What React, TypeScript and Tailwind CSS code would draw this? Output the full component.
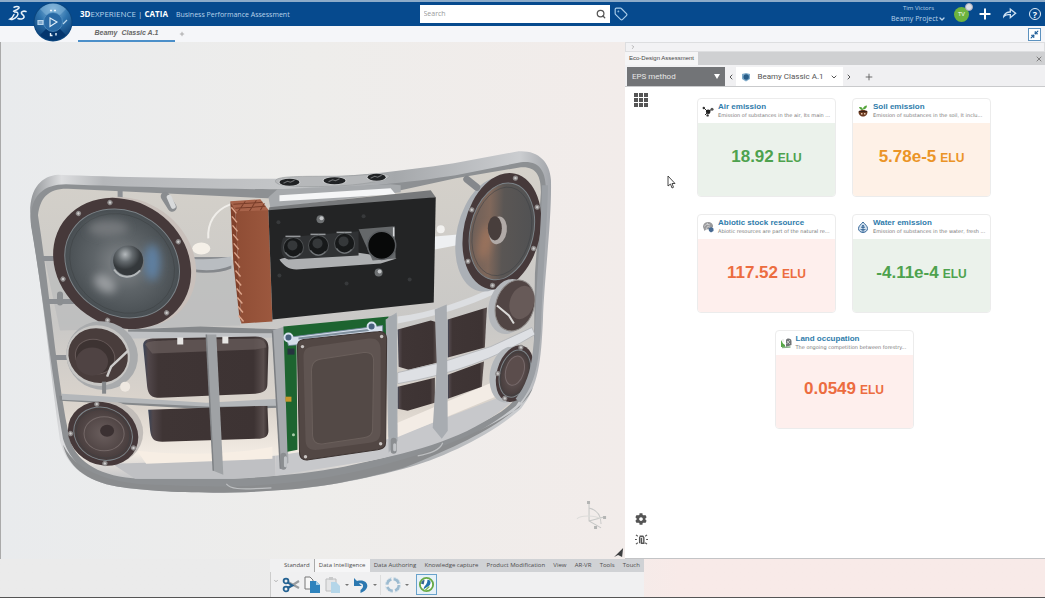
import type { ReactNode } from "react";
import {
  ChevronDown,
  ChevronLeft,
  ChevronRight,
  Minimize2,
  Plus,
  Search,
  Tag,
  X,
} from "lucide-react";
import { FaCog } from "react-icons/fa";
import { RiShareForwardLine } from "react-icons/ri";

type Tone = "green" | "orange" | "red";

interface Impact {
  title: string;
  description: string;
  value: string;
  tone: Tone;
  icon: ReactNode;
}

const toneStyles: Record<Tone, string> = {
  green: "bg-[#ebf2eb] text-[#4ea24e]",
  orange: "bg-[#fef1e7] text-[#eb9426]",
  red: "bg-[#feefed] text-[#ec6c40]",
};

const impacts: Impact[] = [
  {
    title: "Air emission",
    description: "Emission of substances in the air, Its main ...",
    value: "18.92",
    tone: "green",
    icon: <AirIcon />,
  },
  {
    title: "Soil emission",
    description: "Emission of substances in the soil, It inclu...",
    value: "5.78e-5",
    tone: "orange",
    icon: <SoilIcon />,
  },
  {
    title: "Abiotic stock resource",
    description: "Abiotic resources are part of the natural re...",
    value: "117.52",
    tone: "red",
    icon: <StockIcon />,
  },
  {
    title: "Water emission",
    description: "Emission of substances in the water, fresh ...",
    value: "-4.11e-4",
    tone: "green",
    icon: <WaterIcon />,
  },
  {
    title: "Land occupation",
    description: "The ongoing competition between forestry...",
    value: "0.0549",
    tone: "red",
    icon: <LandIcon />,
  },
];

const sections = [
  "Data Authoring",
  "Knowledge capture",
  "Product Modification",
  "View",
  "AR-VR",
  "Tools",
  "Touch",
];

function AirIcon() {
  return (
    <svg viewBox="0 0 12 12" className="size-3">
      <path d="M6 7 2 3M6 7l4-3M6 7 3 10" stroke="#333" strokeWidth="1" />
      <circle cx="6.2" cy="6.8" r="2.3" fill="#222" />
      <circle cx="1.8" cy="3" r="1.2" fill="#333" />
      <circle cx="10" cy="4.2" r="1.5" fill="#555" />
      <circle cx="5.6" cy="10.4" r="1.2" fill="#333" />
    </svg>
  );
}

function SoilIcon() {
  return (
    <svg viewBox="0 0 12 12" className="size-3">
      <path d="M6 5C3 5 2.500 3 2 2c3-.5 4 1 4 3ZM6 4c0-2 2-3.500 4-3.500C10 3 8 4.500 6 4.500Z" fill="#55a53c" />
      <path d="M1.500 6.500C3 4.500 9 4.500 10.500 6.500 10.500 10 8.500 11.500 6 11.500S1.500 10 1.500 6.500Z" fill="#6b3a20" />
      <path d="M4 8h1.500v1.500H4zM7 8h1.500v1.500H7z" fill="#e8c9ae" />
      <path d="M2 6.500h8" stroke="#3a2015" strokeWidth="1" />
    </svg>
  );
}

function StockIcon() {
  return (
    <svg viewBox="0 0 12 12" className="size-3">
      <path d="M1 6C1 2.500 4 .500 7 1c3 .5 4.500 3 4 5l-2 2-5 .500L2.500 10Z" fill="#9a9a9c" />
      <path d="M2 5.500 5 3l3 1M4 8l2-3 3 2M5 1.500 6 4" stroke="#dcdcde" strokeWidth=".7" fill="none" />
      <path d="M6.500 7.500 9 6l2.500 1.500v2.500L9 11.500l-2-1.500Z" fill="#496b93" />
    </svg>
  );
}

function WaterIcon() {
  return (
    <svg viewBox="0 0 12 12" className="size-3">
      <path d="M6 1c2 2.500 4.500 4 4.500 6.500a4.500 4 0 0 1-9 0C1.500 5 4 3.500 6 1Z" fill="#d3e2f0" stroke="#39699a" strokeWidth="1" />
      <path d="M6 4 4.500 6.500h3ZM3.500 8.500h5M4.500 10h3M6 4v6" stroke="#2e5f92" strokeWidth=".8" fill="none" />
    </svg>
  );
}

function LandIcon() {
  return (
    <svg viewBox="0 0 12 12" className="size-3">
      <path d="M1 3v7h4V8L3 6.500Z" fill="#57a747" />
      <path d="M6 3c1-2 5-2 5.500 1v4L6 10Z" fill="#707477" />
      <path d="M2 10.500 10.500 10" stroke="#8ab58a" strokeWidth="1.400" />
      <path d="m7 4 3 3M10 3 6.500 7M3 2v3" stroke="#d6dad6" strokeWidth=".8" />
    </svg>
  );
}

function DassaultLogo() {
  return (
    <svg viewBox="0 0 20 18" className="h-[18px] w-5" fill="none" stroke="#eaf3fa" strokeLinecap="round">
      <path d="M6 2.200c3-1.200 6-.6 4.800 1C9.500 4.800 7 5.600 5.500 6.200" strokeWidth="1.500" />
      <path d="M6.500 7c3.500-.4 4.500 1.600 2.500 4.200C7 13.800 3.500 15 1.800 14.200 3.500 13.500 5.200 11.500 6 9.500" strokeWidth="1.400" />
      <path d="M18 6.500c-2.500-.8-5 0-4.600 1.600.4 1.400 3 2.200 2.700 4-.4 2-3.800 2.400-6.100 1.400" strokeWidth="1.600" />
    </svg>
  );
}

function Compass() {
  return (
    <svg viewBox="0 0 40 40" className="size-10">
      <defs>
        <radialGradient id="compass" cx=".5" cy=".15" r=".9">
          <stop offset="0" stopColor="#8dbbdd" />
          <stop offset=".45" stopColor="#2f74ae" />
          <stop offset="1" stopColor="#06386f" />
        </radialGradient>
      </defs>
      <circle cx="20" cy="20" r="19.500" fill="#0b467f" />
      <circle cx="20" cy="20" r="18.500" fill="url(#compass)" />
      <path d="M7 7a19 19 0 0 1 26 0l-7 7a9 9 0 0 0-12 0Z" fill="#7fb4da" opacity=".5" />
      <path d="M7 33a19 19 0 0 0 26 0l-7-7a9 9 0 0 1-12 0Z" fill="#04366e" />
      <circle cx="20" cy="20" r="9.500" fill="#2a6aa5" stroke="#5d9bc9" strokeWidth=".6" />
      <path d="m17 16 7 4-7 4.500Z" fill="none" stroke="#e3f0fa" strokeWidth="1.100" />
      <path d="M5 18.500h5v4H5zM30 22l4-4" stroke="#b9d5eb" strokeWidth="1.200" fill="#7fa9cd" />
      <path d="M17 8.500h2m2 0h2M17.500 31v2.500h2M23 31v2.500" stroke="#eaf4fc" strokeWidth="1.400" fill="none" />
    </svg>
  );
}

interface DriverProps {
  cx: number;
  cy: number;
  rx: number;
  ry: number;
  tilt: number;
  fill: string;
  screws: number[];
}

function Driver({ cx, cy, rx, ry, tilt, fill, screws }: DriverProps) {
  return (
    <g transform={`translate(${cx} ${cy}) rotate(${tilt})`}>
      <ellipse rx={rx} ry={ry} fill="#46393a" />
      <ellipse rx={rx * 0.83} ry={ry * 0.83} fill={fill} stroke="#7c8489" strokeWidth="1" />
      <ellipse rx={rx * 0.76} ry={ry * 0.76} fill="none" stroke="#3c4043" strokeWidth=".8" opacity=".6" />
      {screws.map((angle) => {
        const a = (angle * Math.PI) / 180;
        return (
          <g key={angle} transform={`translate(${Math.cos(a) * rx * 0.93} ${Math.sin(a) * ry * 0.93})`}>
            <circle r="2.600" fill="#8d8a8a" />
            <circle r="1.200" fill="#cfcdcd" />
          </g>
        );
      })}
    </g>
  );
}

function SpeakerModel() {
  return (
    <svg
      viewBox="0 42 625 516"
      preserveAspectRatio="xMidYMid slice"
      className="h-full w-full"
      role="img"
      aria-label="Beamy Classic speaker model"
    >
      <defs>
        <linearGradient id="rim" x1="0" x2="1" y1="0" y2="0">
          <stop offset="0" stopColor="#929598" />
          <stop offset=".06" stopColor="#dcdddf" />
          <stop offset=".14" stopColor="#b5b7ba" />
          <stop offset=".5" stopColor="#c4c6c8" />
          <stop offset=".7" stopColor="#a5a8ab" />
          <stop offset=".94" stopColor="#cbcdd0" />
          <stop offset="1" stopColor="#a2a5aa" />
        </linearGradient>
        <linearGradient id="inside" x1="0" x2="0" y1="0" y2="1">
          <stop offset="0" stopColor="#d5d1ca" />
          <stop offset=".5" stopColor="#c9c8c6" />
          <stop offset=".78" stopColor="#dcd5cd" />
          <stop offset=".92" stopColor="#f2ebe3" />
          <stop offset="1" stopColor="#c4c5c7" />
        </linearGradient>
        <radialGradient id="woofer">
          <stop offset="0" stopColor="#85898c" />
          <stop offset=".5" stopColor="#5e6468" />
          <stop offset="1" stopColor="#484e52" />
        </radialGradient>
        <linearGradient id="wooferRight" x1="0" x2="1" y1=".6" y2=".3">
          <stop offset="0" stopColor="#6b5e58" />
          <stop offset=".3" stopColor="#80685b" />
          <stop offset=".5" stopColor="#5a5654" />
          <stop offset="1" stopColor="#505153" />
        </linearGradient>
        <radialGradient id="small">
          <stop offset="0" stopColor="#6a5e5d" />
          <stop offset="1" stopColor="#463b3b" />
        </radialGradient>
        <radialGradient id="dome" cx=".4" cy=".3">
          <stop offset="0" stopColor="#b4b9bc" />
          <stop offset=".5" stopColor="#646a6e" />
          <stop offset="1" stopColor="#34383b" />
        </radialGradient>
        <linearGradient id="battery" x1="0" x2="1" y1="0" y2="0">
          <stop offset="0" stopColor="#3a4458" />
          <stop offset=".04" stopColor="#51474a" />
          <stop offset=".12" stopColor="#3f3535" />
          <stop offset=".88" stopColor="#3d3333" />
          <stop offset=".96" stopColor="#594e4d" />
          <stop offset="1" stopColor="#352c2c" />
        </linearGradient>
        <linearGradient id="copper" x1="0" x2="1" y1="0" y2="0">
          <stop offset="0" stopColor="#8f4d35" />
          <stop offset="1" stopColor="#9c583e" />
        </linearGradient>
        <filter id="glow" x="-50%" y="-50%" width="200%" height="200%">
          <feGaussianBlur stdDeviation="4" />
        </filter>
      </defs>

      {/* enclosure */}
      <path
        d="M31 223C27 190 40 176 58 174.500 120 177 220 179 277 178.500 350 177 400 171 453 163L515 151.500C535 149 549 160 550 180 551 220 543 280 542 320 540 360 538 385 520 408 490 435 440 458 403 468 350 482 310 488 270 490 210 494 150 491 118 486 85 480 66 465 60 440 50 370 44 300 31 223Z"
        fill="url(#rim)"
      />
      <path
        d="M31 225C29 197 42 184 66 184 140 187 230 189 285 189 350 189 410 182 455 175L520 162C538 160 545 170 545 190 544 240 538 290 538 330 537 360 530 385 515 405 480 434 440 450 403 460 350 476 310 482 270 485 200 489 150 487 115 481 85 475 70 460 63 438 51 370 44 300 31 225Z"
        fill="#8d9093"
      />
      <path d="M63 444C80 479 130 484 160 484 240 488 290 484 340 474 420 458 480 433 518 407L532 387C523 410 480 437 403 467 350 482 310 488 270 490 210 494 150 491 118 486 85 480 68 465 63 444Z" fill="#8a8c8e" />
      <path
        d="M38 215C40 198 48 188 68 188.500L267 198 400 190 455 178 520 167C535 166 540 175 540 192L534 273 533 350C530 382 515 405 490 417 440 443 410 450 370 460 330 470 290 475 233 478L140 478C100 476 78 462 70 440 55 370 50 290 38 215Z"
        fill="url(#inside)"
      />

      {/* inner walls and floor */}
      <path d="M45 260 190 260 240 259 240 325 60 330Z" fill="#b9babb" opacity=".65" />
      <path d="M112 463 145 462 275 455 275 475 233 478 135 478Z" fill="#bfc0c3" />
      <path d="M275 455 390 438 500 396 512 400C480 430 430 448 370 460L275 475Z" fill="#c7c8cb" />
      <path d="M137 450C190 456 240 452 272 446V458L146 463Z" fill="#f7eee4" />
      <path d="M390 425 495 380 497 395 393 438Z" fill="#f3ece5" />

      {/* slots and top knobs */}
      <path d="M268 197 277 189 390 184 400 185 400 192 270 208Z" fill="#a6a9ac" />
      <path d="M279 195 390 188 395 194 279 201Z" fill="#f5f6f7" />
      <path d="M275 181c0-5 20-5 55-5s52-5 58-1-25 10-58 11-55 0-55-5Z" fill="#b6b8ba" stroke="#95989b" strokeWidth=".6" />
      {[
        [289, 182, 10],
        [334, 180.5, 11],
        [376, 177, 9],
      ].map(([x, y, r]) => (
        <g key={x}>
          <ellipse cx={x} cy={y} rx={r + 1} ry="4" fill="#d0d2d3" />
          <ellipse cx={x} cy={y} rx={r} ry="3.400" fill="#202224" />
          <path d={`M${x - 6} ${y + 1}l4-2 3 1 4-2`} stroke="#6f7173" strokeWidth="1" fill="none" />
        </g>
      ))}
      <path d="M120 190v10M186 259h43M42 258h13M47 301h28M55 357h12" stroke="#8c8f93" strokeWidth="5" />
      <path d="M165 196 172 207" stroke="#8a8d90" strokeWidth="9" strokeLinecap="round" />
      <path d="M169 197 173 206" stroke="#d8dadb" strokeWidth="5" strokeLinecap="round" />
      <path d="M208 238c-1-15 6-28 22-34" stroke="#f0eeea" strokeWidth="2" fill="none" />
      <ellipse cx="201" cy="248" rx="9" ry="6" fill="#f5f0e8" />
      <path d="M190 258C205 260 219 258 231 256V266C216 272 204 270 190 270Z" fill="#b9bdc1" />
      <path d="M190 268C204 271 220 270 231 265V268C220 273 204 273 190 271Z" fill="#85888c" />

      {/* left shelves */}
      <path d="M128 329 200 326 285 329V333L128 334Z" fill="#85888b" />
      <path d="M59 395 214 405 280 402V407L214 409 60 400Z" fill="#85888b" />
      <path d="M120 331 285 333V337L130 338Z" fill="#bfc1c4" />

      {/* big left woofer */}
      <ellipse cx="127" cy="262" rx="72" ry="62" transform="rotate(35 127 262)" fill="#c9c0bb" />
      <Driver cx={122} cy={263} rx={72} ry={62} tilt={35} fill="url(#woofer)" screws={[15, 72, 126, 196, 228, 300]} />
      <ellipse cx="152" cy="262" rx="8" ry="18" fill="#5f80a2" filter="url(#glow)" />
      <ellipse cx="105" cy="283" rx="12" ry="8" fill="#9a9da0" filter="url(#glow)" transform="rotate(35 105 283)" />
      <ellipse cx="108" cy="228" rx="20" ry="8" fill="#74787b" filter="url(#glow)" />
      <circle cx="127" cy="262" r="17" fill="#6e7479" />
      <circle cx="128" cy="260" r="15" fill="url(#dome)" />
      <path d="M114 269c6 9 18 10 26 1" stroke="#b4b8ba" strokeWidth="2" fill="none" />

      {/* left mid driver seen from behind */}
      <ellipse cx="102" cy="355" rx="36" ry="34" transform="rotate(20 102 355)" fill="#a9abad" />
      <ellipse cx="98" cy="355" rx="32" ry="30" transform="rotate(20 98 355)" fill="#c7c6c4" />
      <ellipse cx="98" cy="355" rx="30" ry="27" transform="rotate(20 98 355)" fill="#493d3c" />
      <ellipse cx="95" cy="356" rx="20" ry="17" transform="rotate(20 95 356)" fill="#3d3332" stroke="#675a59" />
      <ellipse cx="92" cy="361" rx="16" ry="14" fill="#4f4343" />
      <path d="M128 350 111 366 107 376" stroke="#cdcccb" strokeWidth="2.500" fill="none" />
      <path d="M104 381v12" stroke="#85888b" strokeWidth="4" />
      <circle cx="125" cy="386" r="5" fill="#eee8e1" />

      {/* left tweeter */}
      <ellipse cx="108" cy="432" rx="35" ry="32" fill="#c2bdb9" />
      <Driver cx={103} cy={433} rx={36} ry={31} tilt={25} fill="url(#small)" screws={[0, 65, 152, 237]} />
      <ellipse cx="104" cy="433" rx="20" ry="17" fill="none" stroke="#746867" />
      <ellipse cx="107" cy="430" rx="7" ry="6" fill="#3b3132" />

      {/* left batteries */}
      <path d="M143 345C143 339 148 338 155 338L255 336C264 336 268 340 268 347L267 383C267 390 263 392 255 393L160 397C151 397 148 394 147 386Z" fill="url(#battery)" />
      <path d="M148 409 267 405 268 430C268 436 264 438 257 438L162 441C153 441 151 437 150 430Z" fill="url(#battery)" />
      <path d="M145 344C148 339 160 340 255 338 263 338 266 343 266 347L255 349 152 353Z" fill="#6b5f5e" opacity=".7" />
      <path d="M177 337h6v7h-6zM222 336h6v7h-6z" fill="#e7e6e4" />
      <path d="M62 393 206 402 280 398V405L212 406 62 399Z" fill="#b4b7ba" />
      <path d="M206 334 216 334 223 474 213 470Z" fill="#9fa2a5" />
      <path d="M206 334 213 470" stroke="#7f8285" strokeWidth="1.500" />
      <path d="M272 330 284 326 288 462 280 468Z" fill="#a6a9ad" />
      <path d="M272 330 280 468" stroke="#7b7e82" strokeWidth="1.500" />

      {/* green board and passive radiator */}
      <path d="M283 326 388 316 388 334 296 344 297 449 287 451Z" fill="#1d6430" />
      <path d="M286 337 382 325 382 337 288 345Z" fill="#d5deea" stroke="#71839b" strokeWidth=".8" />
      <path d="M298 338 372 329" stroke="#80909e" strokeWidth="2" />
      <circle cx="288" cy="337" r="4" fill="#49627e" stroke="#d7e2ef" strokeWidth="2" />
      <circle cx="371" cy="326" r="4" fill="#49627e" stroke="#d7e2ef" strokeWidth="2" />
      <path d="M287 348h7v6h-7z" fill="#26333f" />
      <path d="M285 396h6v5h-6z" fill="#c8962c" />
      <circle cx="293" cy="434" r="1.500" fill="#a8cda9" />
      <path d="M385 319 396 312 397 440 388 452Z" fill="#a9adb2" />
      <path
        d="M303 339 378 331C383 330 386 334 386 338L385 441C385 447 382 448 377 449L308 459C302 460 299 457 299 451L297 346C297 341 299 340 303 339Z"
        fill="#524744"
        stroke="#3e3533"
      />
      <path d="M312 346 368 338C377 337 380 342 380 350V430C380 438 377 441 369 442L318 449C308 450 305 446 305 438L303 357C303 350 305 347 312 346Z" fill="#5f5451" />
      <path d="M324 358 363 352C370 351 373 354 373 361L372 428C372 434 369 436 363 437L323 443C315 444 312 440 312 433L311 371C311 362 314 359 324 358Z" fill="#534946" stroke="#6a5f5b" strokeWidth="1" />
      {[
        [302, 346],
        [381, 336],
        [305, 456],
        [380, 443],
      ].map(([x, y]) => (
        <circle key={x} cx={x} cy={y} r="1.700" fill="#c9c5c3" />
      ))}

      {/* right batteries */}
      <path d="M397 329 430 320 437 322 437 362 408 369 398 366Z" fill="url(#battery)" />
      <path d="M447 319 486 307 484 347 447 357Z" fill="url(#battery)" />
      <path d="M397 386 434 377 434 402 407 410 397 408Z" fill="url(#battery)" />
      <path d="M447 374 483 361 481 386 447 398Z" fill="url(#battery)" />
      <path d="M397 316C430 312 465 300 492 287L497 292C465 307 435 316 397 323Z" fill="#dcdee1" />
      <path d="M397 372 440 362 490 346 531 327 534 334C495 358 450 374 397 383Z" fill="#dee0e4" stroke="#aaadb2" strokeWidth=".7" />
      <path d="M434 309 446 304 447 430 441 438 432 427 436 365Z" fill="#a8acb1" />
      <path d="M388 316 396 314 396 440 388 436Z" fill="#a5aaaf" />

      {/* right woofer */}
      <path d="M434 236 460 234V244L434 249Z" fill="#eef0f2" />
      <circle cx="440" cy="229" r="4" fill="#f2f1ef" />
      <ellipse cx="491" cy="234" rx="35" ry="58" transform="rotate(13 491 234)" fill="#abb0b6" />
      <Driver cx={501} cy={231} rx={38} ry={59} tilt={13} fill="url(#wooferRight)" screws={[10, 85, 138, 195, 272, 325]} />
      <ellipse cx="484" cy="242" rx="6" ry="18" fill="#b77f5f" opacity=".55" filter="url(#glow)" transform="rotate(13 484 242)" />
      <ellipse cx="497" cy="230" rx="9" ry="14" fill="#b1aaa7" transform="rotate(8 497 230)" />
      <ellipse cx="494" cy="228" rx="7" ry="12" fill="#483e3c" />
      <path d="M466 179 476 187" stroke="#85888c" strokeWidth="7" strokeLinecap="round" />

      {/* right small drivers */}
      <ellipse cx="508" cy="306" rx="20" ry="28" transform="rotate(15 508 306)" fill="#b4b7bb" />
      <ellipse cx="514" cy="305" rx="19" ry="26" transform="rotate(18 514 305)" fill="#514544" stroke="#8f8b89" />
      <ellipse cx="521" cy="302" rx="12" ry="17" transform="rotate(18 521 302)" fill="#675a58" />
      <path d="M496 305 508 315 513 323" stroke="#d9d8d6" strokeWidth="2" fill="none" />
      <ellipse cx="507" cy="374" rx="18" ry="28" transform="rotate(10 507 374)" fill="#b3b7bb" />
      <Driver cx={514} cy={373} rx={18} ry={29} tilt={16} fill="url(#small)" screws={[100, 170, 265, 340]} />
      <ellipse cx="514" cy="370" rx="9" ry="15" fill="#5b4d4c" stroke="#76696a" transform="rotate(16 514 370)" />
      <path d="M544 185C544 220 538 280 537 330L535 350C533 372 527 388 517 400" stroke="#9b9fa4" strokeWidth="6" fill="none" />

      {/* copper heat sink */}
      <path d="M230 201 260 199 269 211 235 213Z" fill="#a8634a" />
      <path d="M233 204 262 202M235 208 265 206M238 211 245 201M249 211 256 200M260 210 264 203" stroke="#793d29" strokeWidth="1" />
      <path d="M235 211 268 210 272 321 241 323Z" fill="url(#copper)" />
      <path d="M230 201 235 211 241 323 239 316 233 262Z" fill="#81412b" />
      <g stroke="#dda68c" strokeWidth="1.400">
        {[207, 216, 225, 234, 243, 252, 261, 270, 279, 288, 297, 306, 315].map((y) => (
          <path key={y} d={`M${231 + (y - 207) / 15} ${y}l5 6`} />
        ))}
      </g>

      {/* amplifier block */}
      <path d="M268 211 269 207 430 190 435 197 390 203Z" fill="#77797b" />
      <path d="M268 210 435 197 433 302 272 319Z" fill="#232425" />
      <path d="M279 259C288 255 320 253 356 252L396 258 380 263 296 269C288 269 283 265 279 259Z" fill="#aeb0b2" />
      <path d="M283 237 358 231 358 255 288 259C280 258 279 245 283 237Z" fill="#303234" />
      <path d="M358 229 394 226 395 258 372 260Z" fill="#65686a" />
      {[293, 318, 344].map((x, i) => (
        <g key={x}>
          <path d={`M${x - 8} ${236 - i * 2}h15`} stroke="#94979a" strokeWidth="1.500" />
          <circle cx={x} cy={247 - i * 2} r="10" fill="#17191a" stroke="#4e5153" />
          <circle cx={x - 1} cy={245 - i * 2} r="5" fill="#35383a" />
          <path d={`M${x - 8} ${252 - i * 2}c4 6 11 6 15 1`} stroke="#73777a" strokeWidth="1.200" fill="none" />
        </g>
      ))}
      <circle cx="381" cy="245" r="14" fill="#080909" stroke="#5a5d60" strokeWidth="1.500" />
      <path d="M393 227v9" stroke="#d9dbdd" strokeWidth="1.500" />
      {[
        [320, 219],
        [378, 272],
      ].map(([x, y]) => (
        <g key={x}>
          <circle cx={x} cy={y} r="4" fill="#6d7072" />
          <circle cx={x + 1} cy={y - 1} r="2" fill="#c3c5c7" />
        </g>
      ))}
      <g fill="#37393b">
        <circle cx="278" cy="222" r="2" />
        <circle cx="363" cy="216" r="2" />
        <circle cx="279" cy="275" r="2" />
        <circle cx="346" cy="283" r="2" />
        <circle cx="409" cy="279" r="2" />
      </g>

      {/* posts and cable */}
      <path d="M60 294v8M283 455v11M393 440v10" stroke="#8b8e91" strokeWidth="6" strokeLinecap="round" />
      <path d="M285 457v8M394 444v5" stroke="#c1c4c7" strokeWidth="3" strokeLinecap="round" />
      <path d="M226 483c4 5 10 6 45 4M417 455c12-2 22-5 25-13" stroke="#bcbec0" strokeWidth="1.200" fill="none" />

      {/* axis triad */}
      <g stroke="#c6c7c6" fill="none">
        <path d="M588 502v18l12 7M588 520l15-4M588 507c8 2 12 8 12 16" />
        <path d="M576 518c3-4 18-4 24 0" stroke="#dddcda" />
      </g>
      <path d="M586 500h3v3h-3zM602 515h3v3h-3zM593 525h3v3h-3z" fill="#b4b5b4" />
      <path d="M613 556 622 547 621 556 617 554Z" fill="#3d3f40" />
    </svg>
  );
}

function ImpactCard({ impact }: { impact: Impact }) {
  return (
    <article className="flex h-[99px] w-[139px] flex-col overflow-hidden rounded-[4px] border border-[#ececec] bg-white">
      <header className="flex h-6 shrink-0 items-center gap-1 pl-1">
        {impact.icon}
        <div className="whitespace-nowrap">
          <h2 className="text-[8px] leading-[8px] font-bold text-[#2f7cab]">{impact.title}</h2>
          <p className="font-['DejaVu_Sans',sans-serif] text-[5px] leading-[8px] text-[#777]">{impact.description}</p>
        </div>
      </header>
      <p className={`flex flex-1 items-baseline justify-center gap-1 pt-6 leading-5 ${toneStyles[impact.tone]}`}>
        <span className="text-[17px] font-bold">{impact.value}</span>
        <span className="text-[12px] font-bold">ELU</span>
      </p>
    </article>
  );
}

function TopBar() {
  return (
    <header className="flex h-[26px] items-center border-t-2 border-[#8cabc9] bg-[#064a8e] font-['Open_Sans',sans-serif] text-[#b9d3ea]">
      <div className="flex flex-1 items-center">
        <a href="#" aria-label="Home" className="ml-2">
          <DassaultLogo />
        </a>
        <div className="relative h-6 w-[52px]">
          <button aria-label="Compass" className="absolute top-0 left-[5px] z-10">
            <Compass />
          </button>
        </div>
        <p className="flex items-baseline gap-2 whitespace-nowrap">
          <span className="text-[8px]">
            <b className="text-white">3D</b>EXPERIENCE | <b className="text-white">CATIA</b>
          </span>
          <span className="text-[7px]">Business Performance Assessment</span>
        </p>
      </div>
      <div className="ml-[6px] flex items-center gap-1">
        <label className="flex h-[18px] w-[190px] items-center bg-white px-1">
          <input
            type="search"
            aria-label="Search"
            placeholder="Search"
            className="min-w-0 flex-1 text-[7px] text-gray-700 outline-none placeholder:text-[#999]"
          />
          <Search className="size-[10px] text-[#555]" strokeWidth={3} />
        </label>
        <button aria-label="Tags">
          <Tag className="size-[14px] text-[#a9cdea]" strokeWidth={2} />
        </button>
      </div>
      <div className="flex flex-1 items-center justify-end gap-2 pr-1">
        <div className="text-right">
          <p className="pr-3 text-[6px] leading-[9px]">Tim Victors</p>
          <button className="flex items-center text-[7px] leading-[12px]">
            Beamy Project
            <ChevronDown className="size-2" strokeWidth={4} />
          </button>
        </div>
        <div className="relative flex size-[15px] items-center justify-center rounded-full bg-[#6db33f] text-[6px] text-white">
          TV
          <span className="absolute -top-1 -right-1 size-2 rounded-full border border-[#aab] bg-[#dcdfe6]" />
        </div>
        <button aria-label="Add">
          <Plus className="size-4 text-white" strokeWidth={3} />
        </button>
        <button aria-label="Share">
          <RiShareForwardLine className="size-4 text-[#cfe1f2]" />
        </button>
        <button
          aria-label="Help"
          className="ml-1 flex size-3 items-center justify-center rounded-full border border-[#e1edf8] text-[9px] leading-none font-bold text-white"
        >
          ?
        </button>
      </div>
    </header>
  );
}

function TabStrip() {
  return (
    <nav className="flex h-4 items-stretch bg-[#f5f6f9] pl-[78px] font-['Liberation_Sans',sans-serif]">
      <a
        href="#"
        className="flex w-[97px] items-center justify-center gap-1 border-b-2 border-[#4b8fc9] text-[7px] font-bold text-[#666] italic"
      >
        <span>Beamy</span> <span>Classic A.1</span>
      </a>
      <button aria-label="New tab" className="px-1">
        <Plus className="size-[6px] text-[#999]" strokeWidth={3} />
      </button>
      <button
        aria-label="Exit full screen"
        className="mr-1 ml-auto flex size-[13px] items-center justify-center self-center border border-[#5d92bf] bg-white"
      >
        <Minimize2 className="size-[9px] text-[#1c5c98]" strokeWidth={3} />
      </button>
    </nav>
  );
}

function AssessmentPanel() {
  return (
    <aside className="flex w-[420px] shrink-0 flex-col border-b border-[#c3c4c6] bg-white font-['Liberation_Sans',sans-serif]">
      <div className="flex h-[10px] items-center border border-[#dddee0] bg-[#f2f2f4] pl-1">
        <ChevronRight className="size-[6px] text-[#777]" />
      </div>
      <div className="flex h-[13px] items-stretch justify-between bg-[#cfd0d2] pr-[2px]">
        <span className="flex items-center bg-[#f5f5f6] px-1 text-[6px] whitespace-nowrap text-[#444]">
          Eco-Design Assessment
        </span>
        <button aria-label="Close panel">
          <X className="size-2 text-[#555]" />
        </button>
      </div>
      <div className="flex h-[22px] items-stretch border-t-2 border-b border-t-[#f1f1f3] border-b-[#c9cacc] bg-[#f0f0f2] pl-[2px] font-['Roboto',sans-serif]">
        <div className="relative flex w-[98px] items-stretch">
          <select
            aria-label="Assessment method"
            className="w-full appearance-none bg-[#727477] pl-[5px] text-[8px] text-[#e6e6e6]"
          >
            <option>EPS method</option>
          </select>
          <span className="pointer-events-none absolute top-[7px] right-[5px] border-x-[3px] border-t-[5px] border-x-transparent border-t-white" />
        </div>
        <button aria-label="Previous" className="flex w-[11px] items-center justify-center">
          <ChevronLeft className="size-2 text-[#555]" strokeWidth={3} />
        </button>
        <button className="flex w-[107px] items-center justify-between bg-white px-[5px] text-[8px] whitespace-nowrap text-[#555]">
          <svg viewBox="0 0 10 10" className="size-[10px]">
            <path d="M1 2 5 1l4 1v5L5 9.500 1 7Z" fill="#7eaac9" />
            <circle cx="5.200" cy="5" r="2.700" fill="#275c88" />
          </svg>
          <span>Beamy Classic A.1</span>
          <ChevronDown className="size-2" strokeWidth={3} />
        </button>
        <button aria-label="Next" className="flex w-3 items-center justify-center">
          <ChevronRight className="size-2 text-[#555]" strokeWidth={3} />
        </button>
        <button aria-label="Add assessment" className="flex w-7 items-center justify-center">
          <Plus className="size-[10px] text-[#555]" strokeWidth={2} />
        </button>
      </div>
      <div className="flex flex-1">
        <div className="flex w-8 flex-col items-center pt-[6px] pb-3 text-[#555]">
          <button aria-label="Dashboard">
            <svg viewBox="0 0 14 14" className="size-[14px]" fill="currentColor">
              <path d="M0 0h4v4H0zM5 0h4v4H5zM10 0h4v4h-4zM0 5h4v4H0zM5 5h4v4H5zM10 5h4v4h-4zM0 10h4v4H0zM5 10h4v4H5zM10 10h4v4h-4z" />
            </svg>
          </button>
          <svg viewBox="0 0 10 14" className="mt-[68px] ml-[60px] h-[14px] w-[10px]">
            <path d="M2 1v10l2.500-2L6 13l1.500-.7L6 8.500h3Z" fill="#fff" stroke="#333" strokeWidth=".9" />
          </svg>
          <button aria-label="Settings" className="mt-auto">
            <FaCog className="size-3" />
          </button>
          <button aria-label="Highlight" className="mt-2">
            <svg viewBox="0 0 14 14" className="size-[13px]" fill="none" stroke="currentColor" strokeWidth="1.200">
              <path d="M5 3.500h3.500l1 1.500v6H7V5M5 4v7" strokeWidth="1.500" />
              <path d="m1 2 2 1.500M1 12l2-1.500M13 2l-2 1.500M13 12l-2-1.500M0 7h2M12 7h2" />
            </svg>
          </button>
        </div>
        <div className="flex-1 pt-[11px] pr-[14px]">
          <div className="mx-auto flex max-w-[294px] flex-wrap justify-center gap-x-4 gap-y-[17px]">
            {impacts.map((impact) => (
              <ImpactCard key={impact.title} impact={impact} />
            ))}
          </div>
        </div>
      </div>
    </aside>
  );
}

function Caret() {
  return <span className="border-x-2 border-t-2 border-x-transparent border-t-[#777]" />;
}

function ActionBar() {
  return (
    <footer className="border-b border-[#555] pl-[270px]">
      <div className="w-[374px] bg-[#f0f0f1] font-['Open_Sans',sans-serif]">
        <div className="ml-[10px] flex h-[13px] items-stretch justify-between bg-[#d0d2d5] text-[6px] whitespace-nowrap text-[#4c4c4c]">
          <button className="border-r border-[#aaa] bg-[#f1f1f2] px-1">Standard</button>
          <button className="bg-[#f6f6f7] px-1">Data Intelligence</button>
          {sections.map((section) => (
            <button key={section} className="px-1">
              {section}
            </button>
          ))}
        </div>
        <div className="flex h-[25px] items-center gap-[3px] border-l border-[#ccc] pl-[2px]">
          <button aria-label="Collapse" className="mb-2">
            <ChevronDown className="size-[6px] text-[#777]" />
          </button>
          <button aria-label="Cut">
            <svg viewBox="0 0 18 18" className="size-[18px]" fill="none">
              <path d="M6 6 17 12M6 12 17 5" stroke="#9a9da0" strokeWidth="2.200" />
              <circle cx="4" cy="5" r="2.400" stroke="#246292" strokeWidth="1.800" />
              <circle cx="4" cy="13" r="2.400" stroke="#246292" strokeWidth="1.800" />
              <path d="m5.500 6.500 5 3-5 2.500" stroke="#246292" strokeWidth="2" />
            </svg>
          </button>
          <button aria-label="Copy">
            <svg viewBox="0 0 18 18" className="size-[18px]">
              <path d="M2 1h5l3 3v9H2Z" fill="#f7f7f7" stroke="#777" />
              <path d="M7 5h6l4 4v8H7Z" fill="#2e83bd" />
              <path d="M13 5v4h4Z" fill="#a3cfe9" />
            </svg>
          </button>
          <button aria-label="Paste">
            <svg viewBox="0 0 18 18" className="size-[18px]">
              <path d="M2 3h10v12H2Z" fill="#e6e6e7" stroke="#bcbdbe" />
              <path d="M5 1h4v3H5Z" fill="#c8c9ca" />
              <path d="M7 6h5l4 4v7H7Z" fill="#b5d6e9" />
            </svg>
          </button>
          <Caret />
          <button aria-label="Undo">
            <svg viewBox="0 0 18 18" className="size-[18px]">
              <path d="M2 2v8h8L7 7.500c4-1 6 3 1.500 6.500v3C19 14 17 2 5 5Z" fill="#2c78b0" />
            </svg>
          </button>
          <Caret />
          <span className="h-5 w-px bg-[#ddd]" />
          <button aria-label="Update">
            <svg viewBox="0 0 18 18" className="size-[18px]" fill="none">
              <circle cx="9" cy="9" r="6" stroke="#9dbbd0" strokeWidth="3" strokeDasharray="7 2.400" />
              <circle cx="9" cy="9" r="7.500" stroke="#d4e1ea" strokeWidth="1" strokeDasharray="4 2" />
            </svg>
          </button>
          <Caret />
          <button aria-label="Eco design" className="ml-1 border border-[#69a2cb] bg-[#e6f1f8] p-px">
            <svg viewBox="0 0 18 18" className="size-[17px]" fill="none">
              <circle cx="9" cy="9" r="7" fill="#fff" stroke="#68aa48" strokeWidth="2" />
              <path d="M10 4c4 0 4 4 2 6l-6 4c0-4 4-4 4-10Z" fill="#2474ac" />
              <path d="M3 8c1-3 3-4 4-4L6 9Z" fill="#35678e" />
              <path d="M12 11 7 16" stroke="#7fbd59" strokeWidth="1.500" />
            </svg>
          </button>
        </div>
      </div>
    </footer>
  );
}

export default function App() {
  return (
    <div className="flex min-h-screen flex-col bg-linear-to-r from-[#ebebeb] from-20% via-[#eeedeb] via-50% to-[#f8eae8] to-65%">
      <TopBar />
      <TabStrip />
      <main className="flex min-h-0 flex-1">
        <div className="relative min-w-0 flex-1 border-l border-[#aaa] bg-linear-to-r from-[#e9ebed] via-[#eeedeb] to-[#f2ecea]">
          <div className="absolute inset-0">
            <SpeakerModel />
          </div>
        </div>
        <AssessmentPanel />
      </main>
      <ActionBar />
    </div>
  );
}
